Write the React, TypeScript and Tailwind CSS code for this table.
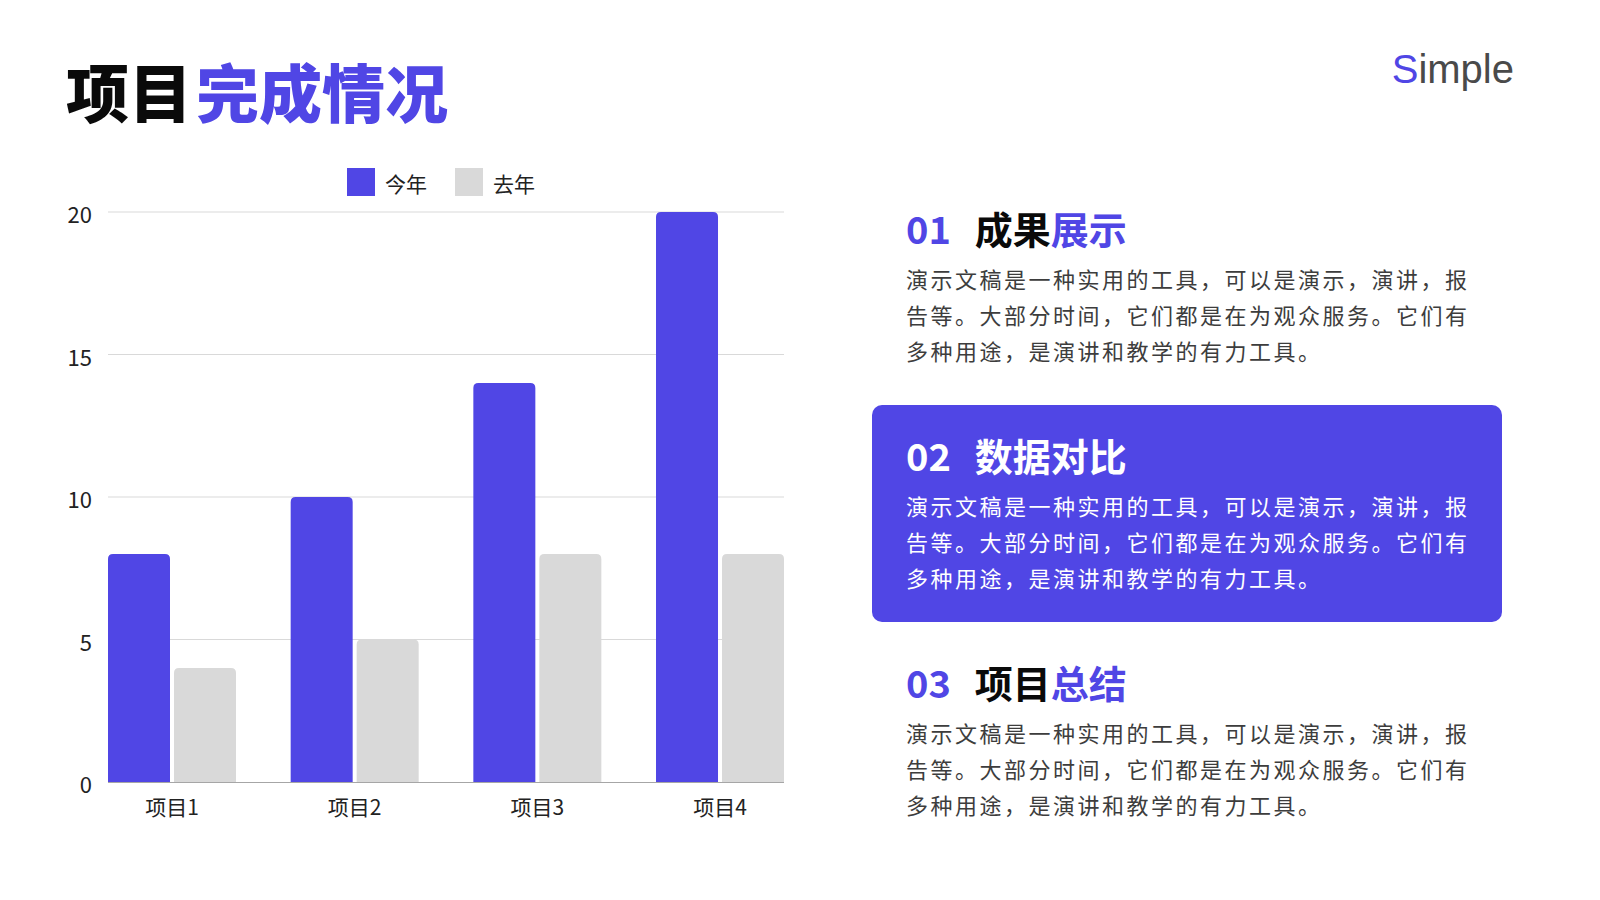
import React from 'react'

const BLUE = '#5046e5'
const GRAY = '#d9d9d9'

const data = [
  { label: '项目1', now: 8, last: 4 },
  { label: '项目2', now: 10, last: 5 },
  { label: '项目3', now: 14, last: 8 },
  { label: '项目4', now: 20, last: 8 },
]

const body =
  '演示文稿是一种实用的工具，可以是演示，演讲，报告等。大部分时间，它们都是在为观众服务。它们有多种用途，是演讲和教学的有力工具。'

const sections = [
  { no: '01', dark: '成果', blue: '展示', active: false },
  { no: '02', dark: '数据', blue: '对比', active: true },
  { no: '03', dark: '项目', blue: '总结', active: false },
]

// chart coords: svg origin sits at page (50, 155)
const PLOT_LEFT = 58
const PLOT_RIGHT = 734
const BASE = 627
const UNIT = 28.5
const STEP = 182.67
const BAR_W = 62

function barPath(x: number, top: number, w: number, bottom: number, r = 5) {
  return `M${x},${bottom} V${top + r} Q${x},${top} ${x + r},${top} H${x + w - r} Q${x + w},${top} ${x + w},${top + r} V${bottom} Z`
}

function Chart() {
  const ticks = [0, 5, 10, 15, 20]
  return (
    <svg
      width={760}
      height={680}
      viewBox="0 0 760 680"
      className="font-['Noto_Sans_CJK_SC',sans-serif]"
    >
      {/* legend */}
      <rect x={297} y={13} width={28} height={28} fill={BLUE} />
      <text x={335} y={28} fontSize={21} fill="#222" dominantBaseline="central">
        今年
      </text>
      <rect x={405} y={13} width={28} height={28} fill={GRAY} />
      <text x={443} y={28} fontSize={21} fill="#222" dominantBaseline="central">
        去年
      </text>

      {/* grid + y labels */}
      {ticks.map((t) => {
        const y = BASE - t * UNIT
        return (
          <g key={t}>
            {t > 0 && (
              <line x1={PLOT_LEFT} x2={PLOT_RIGHT} y1={y} y2={y} stroke="#d9d9d9" strokeWidth={1} />
            )}
            <text x={42} y={y + 1} fontSize={22} fill="#222" textAnchor="end" dominantBaseline="central">
              {t}
            </text>
          </g>
        )
      })}

      {/* bars */}
      {data.map((d, i) => {
        const x = PLOT_LEFT + STEP * i
        return (
          <g key={d.label}>
            <path d={barPath(x, BASE - d.now * UNIT, BAR_W, BASE)} fill={BLUE} />
            <path d={barPath(x + BAR_W + 4, BASE - d.last * UNIT, BAR_W, BASE)} fill={GRAY} />
            <text
              x={x + BAR_W + 2}
              y={651}
              fontSize={21}
              fill="#222"
              textAnchor="middle"
              dominantBaseline="central"
            >
              {d.label}
            </text>
          </g>
        )
      })}

      <line x1={PLOT_LEFT} x2={PLOT_RIGHT} y1={BASE + 0.5} y2={BASE + 0.5} stroke="#a6a6a6" strokeWidth={1} />
    </svg>
  )
}

export default function App() {
  return (
    <div className="h-[900px] w-[1600px] overflow-hidden bg-white font-['Noto_Sans_CJK_SC',sans-serif]">
      {/* Header */}
      <div className="flex items-start justify-between pl-[66px] pr-[86px]">
        <h1 className="mt-[58px] text-[63px] font-black leading-none text-[#0a0a0a]">
          项目<span className="ml-[4px] text-[#5046e5]">完成情况</span>
        </h1>
        <div className="mt-[49px] font-['Liberation_Sans',Arial,sans-serif] text-[40px] leading-none text-[#4a4a4a]">
          <span className="text-[#5046e5]">S</span>imple
        </div>
      </div>

      <div className="flex items-start">
        {/* Chart */}
        <div className="ml-[50px] mt-[34px]">
          <Chart />
        </div>

        {/* Sections */}
        <div className="ml-[62px] mt-[57px] flex w-[630px] flex-col gap-[10px]">
          {sections.map((s) => (
            <div
              key={s.no}
              className={
                s.active
                  ? 'rounded-[10px] bg-[#5046e5] px-[34px] pb-[27px] pt-[26px] text-white'
                  : 'rounded-[10px] px-[34px] pb-[27px] pt-[26px]'
              }
            >
              <h2 className="flex text-[38px] font-bold leading-[48px]">
                <span className={s.active ? 'text-white' : 'text-[#5046e5]'}>{s.no}</span>
                <span className="ml-[24px]">
                  <span className={s.active ? 'text-white' : 'text-[#0a0a0a]'}>{s.dark}</span>
                  <span className={s.active ? 'text-white' : 'text-[#5046e5]'}>{s.blue}</span>
                </span>
              </h2>
              <p
                className={
                  s.active
                    ? 'mt-[8px] w-[572px] text-[22px] leading-[36px] tracking-[2.5px] text-white'
                    : 'mt-[8px] w-[572px] text-[22px] leading-[36px] tracking-[2.5px] text-[#3d3d3d]'
                }
              >
                {body}
              </p>
            </div>
          ))}
        </div>
      </div>
    </div>
  )
}
